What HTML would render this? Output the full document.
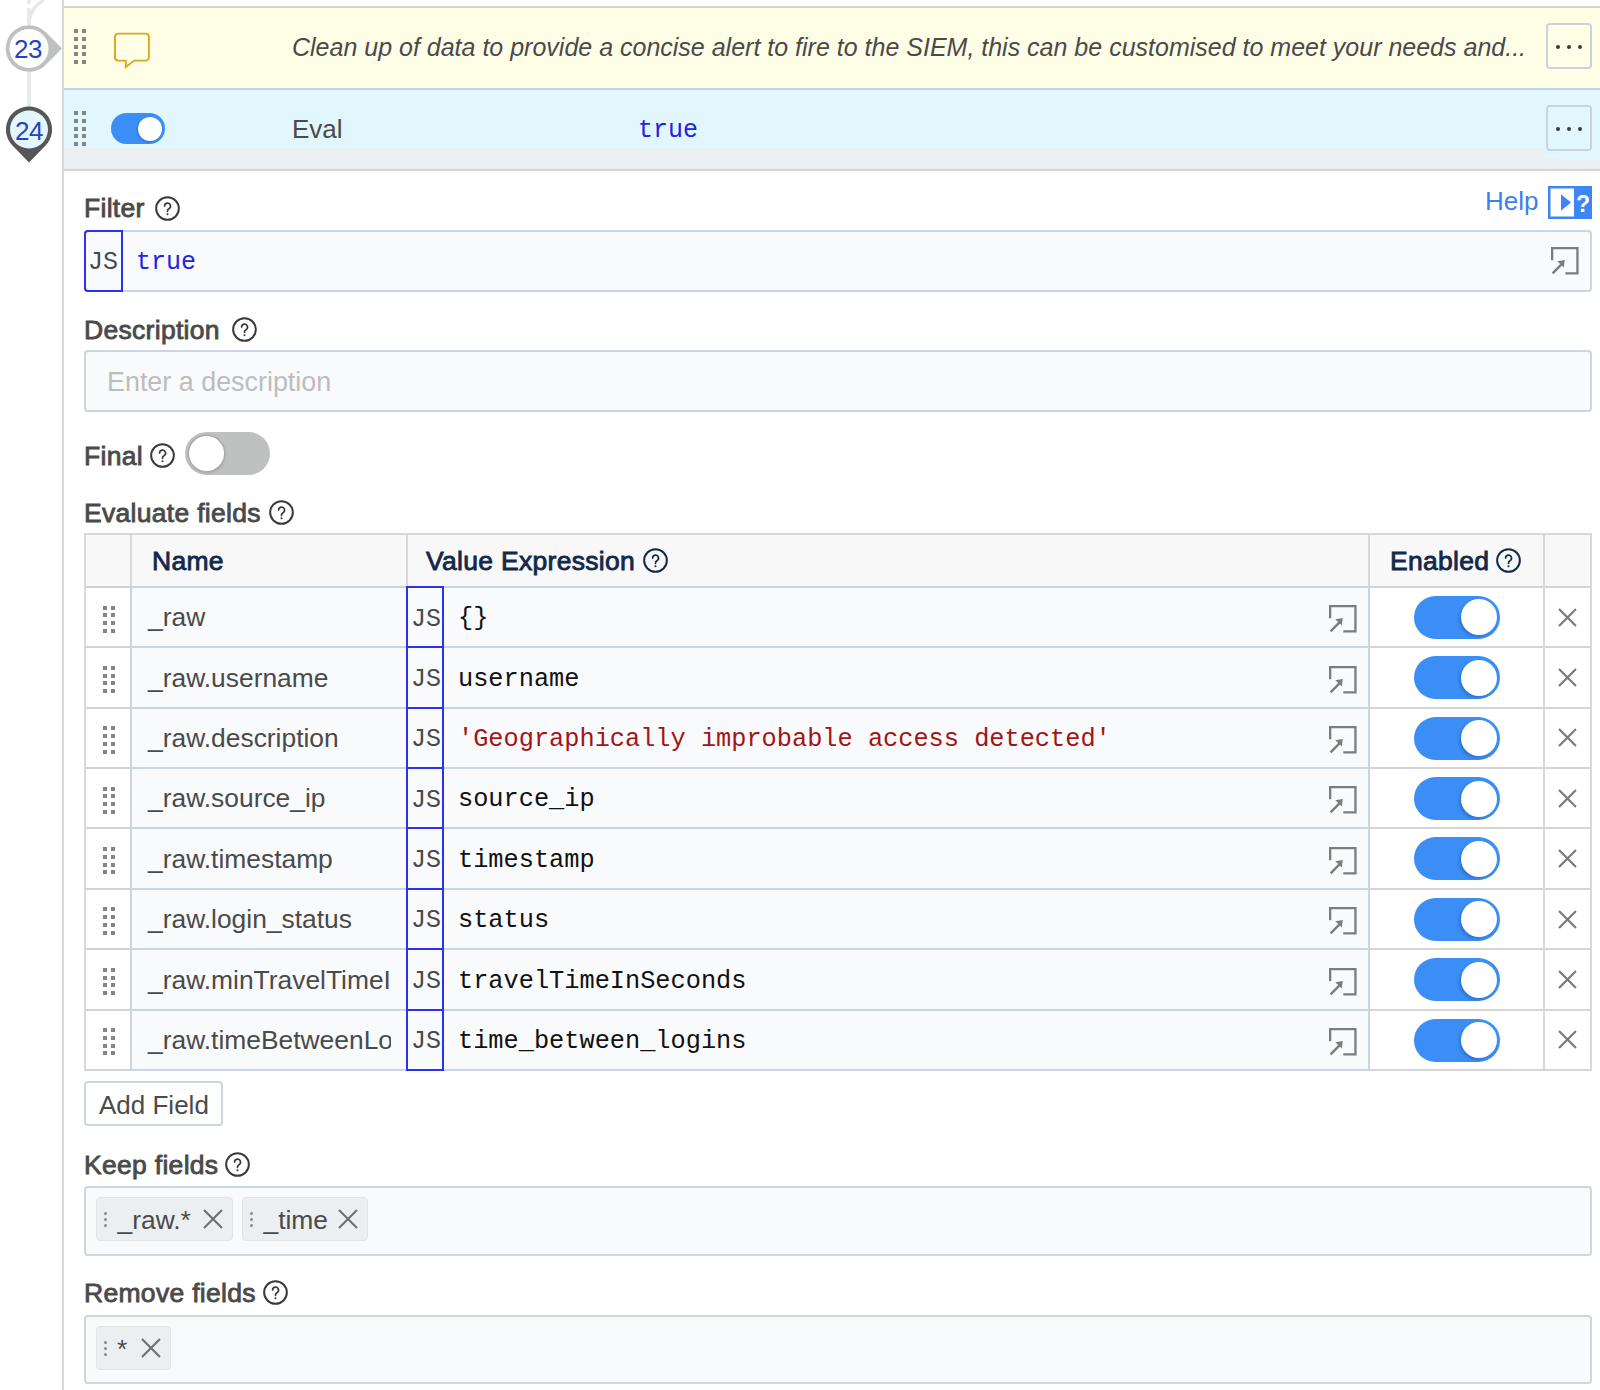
<!DOCTYPE html>
<html><head><meta charset="utf-8"><title>Eval</title>
<style>
html,body{margin:0;padding:0;}
body{width:1600px;height:1390px;overflow:hidden;position:relative;background:#fff;font-family:'Liberation Sans', sans-serif;}
.a{position:absolute;}
.t{position:absolute;white-space:nowrap;}
</style></head><body>
<div class="a" style="left:62px;top:0px;width:2px;height:1390px;background:#d7d8da"></div><svg class="a" style="left:0;top:0" width="62" height="170" viewBox="0 0 62 170"><path d="M29 0V4M29 8V25" stroke="#e6e9eb" stroke-width="3.5" fill="none"/><path d="M29 24C29 14 34 6 44 0" stroke="#e6e9eb" stroke-width="3.5" fill="none"/><path d="M29 72V107" stroke="#e6e9eb" stroke-width="3.5" fill="none"/><path d="M29 25.2A23.3 23.3 0 0 1 45.5 32L62 48.5L45.5 65A23.3 23.3 0 1 1 29 25.2Z" fill="#bfc0c0"/><circle cx="29" cy="48.5" r="19.5" fill="#fff"/><path d="M29 106.5A23 23 0 0 1 45.3 145.8L29 162.5L12.7 145.8A23 23 0 0 1 29 106.5Z" fill="#555757"/><circle cx="29" cy="129.5" r="19" fill="#e3f6fd"/></svg><div class="t" style="left:14px;top:35.99px;font-size:26px;line-height:26px;color:#2544c4;font-weight:400;font-style:normal;font-family:'Liberation Sans', sans-serif;letter-spacing:-0.5px">23</div><div class="t" style="left:15px;top:117.99px;font-size:26px;line-height:26px;color:#2544c4;font-weight:400;font-style:normal;font-family:'Liberation Sans', sans-serif;letter-spacing:-0.5px">24</div><div class="a" style="left:64px;top:6px;width:1536px;height:2px;background:#d5d3bd"></div><div class="a" style="left:64px;top:8px;width:1536px;height:80px;background:#fefee7"></div><div class="a" style="left:74px;top:29.0px;width:4px;height:4px;background:#858585"></div><div class="a" style="left:82px;top:29.0px;width:4px;height:4px;background:#858585"></div><div class="a" style="left:74px;top:36.75px;width:4px;height:4px;background:#858585"></div><div class="a" style="left:82px;top:36.75px;width:4px;height:4px;background:#858585"></div><div class="a" style="left:74px;top:44.5px;width:4px;height:4px;background:#858585"></div><div class="a" style="left:82px;top:44.5px;width:4px;height:4px;background:#858585"></div><div class="a" style="left:74px;top:52.25px;width:4px;height:4px;background:#858585"></div><div class="a" style="left:82px;top:52.25px;width:4px;height:4px;background:#858585"></div><div class="a" style="left:74px;top:60.0px;width:4px;height:4px;background:#858585"></div><div class="a" style="left:82px;top:60.0px;width:4px;height:4px;background:#858585"></div><svg class="a" style="left:112px;top:31px" width="40" height="40" viewBox="0 0 40 40"><path d="M6 2.6H33.4A3.3 3.3 0 0 1 36.9 6V26.2A3.3 3.3 0 0 1 33.4 29.6H22.2L13.8 36V29.6H6A3.3 3.3 0 0 1 3 26.2V6A3.3 3.3 0 0 1 6 2.6Z" fill="none" stroke="#d6a91c" stroke-width="1.9" stroke-linejoin="miter"/></svg><div class="t" style="left:292px;top:35.34px;font-size:25px;line-height:25px;color:#4a4a4a;font-weight:400;font-style:italic;font-family:'Liberation Sans', sans-serif;">Clean up of data to provide a concise alert to fire to the SIEM, this can be customised to meet your needs and...</div><div class="a" style="left:1546px;top:23px;width:46px;height:46px;box-sizing:border-box;border:2px solid #c9d3de;border-radius:4px;background:#fefee7"></div><div class="a" style="left:1555.9px;top:44.6px;width:4.2px;height:4.2px;border-radius:50%;background:#3a3a3a"></div><div class="a" style="left:1566.9px;top:44.6px;width:4.2px;height:4.2px;border-radius:50%;background:#3a3a3a"></div><div class="a" style="left:1577.9px;top:44.6px;width:4.2px;height:4.2px;border-radius:50%;background:#3a3a3a"></div><div class="a" style="left:64px;top:88px;width:1536px;height:2px;background:#c3d2dc"></div><div class="a" style="left:64px;top:90px;width:1536px;height:58px;background:#e2f6fe"></div><div class="a" style="left:64px;top:148px;width:1536px;height:21px;background:#ebeff2"></div><div class="a" style="left:64px;top:169px;width:1536px;height:2px;background:#d4d5d6"></div><div class="a" style="left:1544px;top:148px;width:18px;height:9.5px;background:#e2f6fe"></div><div class="a" style="left:1562px;top:148px;width:38px;height:12px;background:#e2f6fe"></div><div class="a" style="left:74px;top:111.0px;width:4px;height:4px;background:#858585"></div><div class="a" style="left:82px;top:111.0px;width:4px;height:4px;background:#858585"></div><div class="a" style="left:74px;top:118.75px;width:4px;height:4px;background:#858585"></div><div class="a" style="left:82px;top:118.75px;width:4px;height:4px;background:#858585"></div><div class="a" style="left:74px;top:126.5px;width:4px;height:4px;background:#858585"></div><div class="a" style="left:82px;top:126.5px;width:4px;height:4px;background:#858585"></div><div class="a" style="left:74px;top:134.25px;width:4px;height:4px;background:#858585"></div><div class="a" style="left:82px;top:134.25px;width:4px;height:4px;background:#858585"></div><div class="a" style="left:74px;top:142.0px;width:4px;height:4px;background:#858585"></div><div class="a" style="left:82px;top:142.0px;width:4px;height:4px;background:#858585"></div><div class="a" style="left:111px;top:113px;width:54px;height:31px;border-radius:16px;background:#3b8ef6"></div><div class="a" style="left:138px;top:116.5px;width:24px;height:24px;border-radius:50%;background:#fff;box-shadow:-1px 1px 2px rgba(0,0,60,0.2)"></div><div class="t" style="left:292px;top:115.99px;font-size:26px;line-height:26px;color:#4a4a4a;font-weight:400;font-style:normal;font-family:'Liberation Sans', sans-serif;">Eval</div><div class="t" style="left:638px;top:117.84px;font-size:25px;line-height:25px;color:#2323e0;font-weight:400;font-style:normal;font-family:'Liberation Mono', monospace;">true</div><div class="a" style="left:1546px;top:105px;width:46px;height:46px;box-sizing:border-box;border:2px solid #c9d3de;border-radius:4px;background:#e2f6fe"></div><div class="a" style="left:1555.9px;top:126.6px;width:4.2px;height:4.2px;border-radius:50%;background:#3a3a3a"></div><div class="a" style="left:1566.9px;top:126.6px;width:4.2px;height:4.2px;border-radius:50%;background:#3a3a3a"></div><div class="a" style="left:1577.9px;top:126.6px;width:4.2px;height:4.2px;border-radius:50%;background:#3a3a3a"></div><div class="t" style="left:84px;top:195.07px;font-size:26.5px;line-height:26.5px;color:#4a4a4a;font-weight:400;font-style:normal;font-family:'Liberation Sans', sans-serif;-webkit-text-stroke:0.85px #4a4a4a;letter-spacing:0.3px">Filter</div><svg class="a" style="left:154.90px;top:196.00px" width="25" height="25" viewBox="0 0 24 24"><circle cx="12" cy="12" r="10.9" fill="none" stroke="#3a3a3a" stroke-width="1.9"/><path d="M9.2 9.7a2.85 2.85 0 1 1 4.2 2.5c-0.9 0.5-1.4 1.1-1.4 2.1v0.6" fill="none" stroke="#3a3a3a" stroke-width="1.6" stroke-linecap="round"/><circle cx="12" cy="17.5" r="1.0" fill="#3a3a3a"/></svg><div class="t" style="left:1485px;top:187.99px;font-size:26px;line-height:26px;color:#3b80f0;font-weight:400;font-style:normal;font-family:'Liberation Sans', sans-serif;">Help</div><svg class="a" style="left:1548px;top:186px" width="44" height="33" viewBox="0 0 44 33"><rect x="0" y="0" width="44" height="33" fill="#3d86f6"/><rect x="2.5" y="2.5" width="23.5" height="28" fill="#fff"/><path d="M13 8.3L23 16.5L13 24.7Z" fill="#3d86f6"/><text x="35" y="25.5" font-family="Liberation Sans" font-weight="700" font-size="23" fill="#fff" text-anchor="middle">?</text></svg><div class="a" style="left:84px;top:230px;width:1508px;height:62px;box-sizing:border-box;border:2px solid #cad6e0;border-radius:4px;background:#f9fafc"></div><div class="a" style="left:84px;top:230px;width:39px;height:62px;box-sizing:border-box;border:2px solid #2f2ff2;border-radius:4px 0 0 4px"></div><div class="t" style="left:88px;top:250.34px;font-size:25px;line-height:25px;color:#4a4a4a;font-weight:400;font-style:normal;font-family:'Liberation Mono', monospace;">JS</div><div class="t" style="left:136px;top:250.34px;font-size:25px;line-height:25px;color:#2323e0;font-weight:400;font-style:normal;font-family:'Liberation Mono', monospace;">true</div><svg class="a" style="left:1548.40px;top:244.20px" width="34" height="34" viewBox="0 0 34 34"><path d="M4.15 16.3V4.15H29.45V29.4H17.3" fill="none" stroke="#7b7c7e" stroke-width="2.3"/><path d="M4.6 29.3L14.2 19.6" fill="none" stroke="#7b7c7e" stroke-width="2.4"/><path d="M9.3 17.2L16.8 16.1L15.8 23.5Z" fill="#7b7c7e"/></svg><div class="t" style="left:84px;top:316.57px;font-size:26.5px;line-height:26.5px;color:#4a4a4a;font-weight:400;font-style:normal;font-family:'Liberation Sans', sans-serif;-webkit-text-stroke:0.85px #4a4a4a;letter-spacing:0.3px">Description</div><svg class="a" style="left:231.90px;top:316.50px" width="25" height="25" viewBox="0 0 24 24"><circle cx="12" cy="12" r="10.9" fill="none" stroke="#3a3a3a" stroke-width="1.9"/><path d="M9.2 9.7a2.85 2.85 0 1 1 4.2 2.5c-0.9 0.5-1.4 1.1-1.4 2.1v0.6" fill="none" stroke="#3a3a3a" stroke-width="1.6" stroke-linecap="round"/><circle cx="12" cy="17.5" r="1.0" fill="#3a3a3a"/></svg><div class="a" style="left:84px;top:350px;width:1508px;height:62px;box-sizing:border-box;border:2px solid #cad6e0;border-radius:4px;background:#f9fafc"></div><div class="t" style="left:107px;top:368.53px;font-size:26.9px;line-height:26.9px;color:#bdbdbd;font-weight:400;font-style:normal;font-family:'Liberation Sans', sans-serif;">Enter a description</div><div class="t" style="left:84px;top:442.57px;font-size:26.5px;line-height:26.5px;color:#4a4a4a;font-weight:400;font-style:normal;font-family:'Liberation Sans', sans-serif;-webkit-text-stroke:0.85px #4a4a4a;letter-spacing:0.3px">Final</div><svg class="a" style="left:150.30px;top:443.00px" width="25" height="25" viewBox="0 0 24 24"><circle cx="12" cy="12" r="10.9" fill="none" stroke="#3a3a3a" stroke-width="1.9"/><path d="M9.2 9.7a2.85 2.85 0 1 1 4.2 2.5c-0.9 0.5-1.4 1.1-1.4 2.1v0.6" fill="none" stroke="#3a3a3a" stroke-width="1.6" stroke-linecap="round"/><circle cx="12" cy="17.5" r="1.0" fill="#3a3a3a"/></svg><div class="a" style="left:185px;top:432px;width:85px;height:43px;border-radius:22px;background:#bfc1c0"></div><div class="a" style="left:188.6px;top:435.8px;width:35.6px;height:35.6px;border-radius:50%;background:#fff;box-shadow:0 0 0 1.6px #a9abaa, 1px 2px 3px rgba(0,0,0,0.12)"></div><div class="t" style="left:84px;top:499.57px;font-size:26.5px;line-height:26.5px;color:#4a4a4a;font-weight:400;font-style:normal;font-family:'Liberation Sans', sans-serif;-webkit-text-stroke:0.85px #4a4a4a;letter-spacing:0.3px">Evaluate fields</div><svg class="a" style="left:268.80px;top:499.50px" width="25" height="25" viewBox="0 0 24 24"><circle cx="12" cy="12" r="10.9" fill="none" stroke="#3a3a3a" stroke-width="1.9"/><path d="M9.2 9.7a2.85 2.85 0 1 1 4.2 2.5c-0.9 0.5-1.4 1.1-1.4 2.1v0.6" fill="none" stroke="#3a3a3a" stroke-width="1.6" stroke-linecap="round"/><circle cx="12" cy="17.5" r="1.0" fill="#3a3a3a"/></svg><div class="a" style="left:84px;top:534px;width:1508px;height:53px;background:#f8f8f8"></div><div class="a" style="left:131px;top:587px;width:1238px;height:60px;background:#f9fafc"></div><div class="a" style="left:131px;top:647px;width:1238px;height:61px;background:#f9fafc"></div><div class="a" style="left:131px;top:708px;width:1238px;height:60px;background:#f9fafc"></div><div class="a" style="left:131px;top:768px;width:1238px;height:60px;background:#f9fafc"></div><div class="a" style="left:131px;top:828px;width:1238px;height:61px;background:#f9fafc"></div><div class="a" style="left:131px;top:889px;width:1238px;height:60px;background:#f9fafc"></div><div class="a" style="left:131px;top:949px;width:1238px;height:61px;background:#f9fafc"></div><div class="a" style="left:131px;top:1010px;width:1238px;height:60px;background:#f9fafc"></div><div class="a" style="left:84px;top:646px;width:47px;height:2px;background:#d3d3d3"></div><div class="a" style="left:131px;top:646px;width:1238px;height:2px;background:#c9d6e1"></div><div class="a" style="left:1369px;top:646px;width:223px;height:2px;background:#d5d5d5"></div><div class="a" style="left:84px;top:707px;width:47px;height:2px;background:#d3d3d3"></div><div class="a" style="left:131px;top:707px;width:1238px;height:2px;background:#c9d6e1"></div><div class="a" style="left:1369px;top:707px;width:223px;height:2px;background:#d5d5d5"></div><div class="a" style="left:84px;top:767px;width:47px;height:2px;background:#d3d3d3"></div><div class="a" style="left:131px;top:767px;width:1238px;height:2px;background:#c9d6e1"></div><div class="a" style="left:1369px;top:767px;width:223px;height:2px;background:#d5d5d5"></div><div class="a" style="left:84px;top:827px;width:47px;height:2px;background:#d3d3d3"></div><div class="a" style="left:131px;top:827px;width:1238px;height:2px;background:#c9d6e1"></div><div class="a" style="left:1369px;top:827px;width:223px;height:2px;background:#d5d5d5"></div><div class="a" style="left:84px;top:888px;width:47px;height:2px;background:#d3d3d3"></div><div class="a" style="left:131px;top:888px;width:1238px;height:2px;background:#c9d6e1"></div><div class="a" style="left:1369px;top:888px;width:223px;height:2px;background:#d5d5d5"></div><div class="a" style="left:84px;top:948px;width:47px;height:2px;background:#d3d3d3"></div><div class="a" style="left:131px;top:948px;width:1238px;height:2px;background:#c9d6e1"></div><div class="a" style="left:1369px;top:948px;width:223px;height:2px;background:#d5d5d5"></div><div class="a" style="left:84px;top:1009px;width:47px;height:2px;background:#d3d3d3"></div><div class="a" style="left:131px;top:1009px;width:1238px;height:2px;background:#c9d6e1"></div><div class="a" style="left:1369px;top:1009px;width:223px;height:2px;background:#d5d5d5"></div><div class="a" style="left:84px;top:1069px;width:47px;height:2px;background:#d3d3d3"></div><div class="a" style="left:131px;top:1069px;width:1238px;height:2px;background:#c9d6e1"></div><div class="a" style="left:1369px;top:1069px;width:223px;height:2px;background:#d5d5d5"></div><div class="a" style="left:84px;top:533px;width:1508px;height:2px;background:#d8d8d8"></div><div class="a" style="left:84px;top:586px;width:47px;height:2px;background:#d0d0d0"></div><div class="a" style="left:131px;top:586px;width:1238px;height:2px;background:#c9d6e0"></div><div class="a" style="left:1369px;top:586px;width:223px;height:2px;background:#d4d4d4"></div><div class="a" style="left:84px;top:534px;width:2px;height:536px;background:#d8d8d8"></div><div class="a" style="left:130px;top:534px;width:2px;height:53px;background:#d8d8d8"></div><div class="a" style="left:130px;top:587px;width:2px;height:483px;background:#c9d6e1"></div><div class="a" style="left:406px;top:534px;width:2px;height:53px;background:#d8d8d8"></div><div class="a" style="left:1368px;top:534px;width:2px;height:53px;background:#d8d8d8"></div><div class="a" style="left:1368px;top:587px;width:2px;height:483px;background:#c9d6e1"></div><div class="a" style="left:1543px;top:534px;width:2px;height:536px;background:#d8d8d8"></div><div class="a" style="left:1590px;top:534px;width:2px;height:536px;background:#d8d8d8"></div><div class="a" style="left:103px;top:605.5px;width:4px;height:4px;background:#858585"></div><div class="a" style="left:111px;top:605.5px;width:4px;height:4px;background:#858585"></div><div class="a" style="left:103px;top:613.25px;width:4px;height:4px;background:#858585"></div><div class="a" style="left:111px;top:613.25px;width:4px;height:4px;background:#858585"></div><div class="a" style="left:103px;top:621.0px;width:4px;height:4px;background:#858585"></div><div class="a" style="left:111px;top:621.0px;width:4px;height:4px;background:#858585"></div><div class="a" style="left:103px;top:628.75px;width:4px;height:4px;background:#858585"></div><div class="a" style="left:111px;top:628.75px;width:4px;height:4px;background:#858585"></div><div class="a" style="left:147px;top:587px;width:244px;height:60px;overflow:hidden"><div class="t" style="left:1px;top:17.34px;font-size:26.4px;line-height:26.4px;color:#4a4a4a;font-weight:400;font-style:normal;font-family:'Liberation Sans', sans-serif;">_raw</div></div><div class="a" style="left:406px;top:586px;width:38px;height:62px;box-sizing:border-box;border:2px solid #3030f0"></div><div class="t" style="left:411px;top:606.52px;font-size:25px;line-height:25px;color:#4a4a4a;font-weight:400;font-style:normal;font-family:'Liberation Mono', monospace;">JS</div><div class="t" style="left:458px;top:606.30px;font-size:25.3px;line-height:25.3px;color:#111;font-weight:400;font-style:normal;font-family:'Liberation Mono', monospace;">{}</div><svg class="a" style="left:1326.10px;top:602.25px" width="34" height="34" viewBox="0 0 34 34"><path d="M4.15 16.3V4.15H29.45V29.4H17.3" fill="none" stroke="#7b7c7e" stroke-width="2.3"/><path d="M4.6 29.3L14.2 19.6" fill="none" stroke="#7b7c7e" stroke-width="2.4"/><path d="M9.3 17.2L16.8 16.1L15.8 23.5Z" fill="#7b7c7e"/></svg><div class="a" style="left:1414px;top:595.89px;width:86px;height:43px;border-radius:21.5px;background:#3b8ef6"></div><div class="a" style="left:1460.5px;top:599.39px;width:36px;height:36px;border-radius:50%;background:#fff;box-shadow:-2px 2px 3px rgba(0,0,60,0.18)"></div><svg class="a" style="left:1558px;top:608px" width="19" height="19" viewBox="0 0 19 19"><path d="M1 1L18 18M18 1L1 18" stroke="#7a7a7a" stroke-width="2.2" fill="none"/></svg><div class="a" style="left:103px;top:665.88px;width:4px;height:4px;background:#858585"></div><div class="a" style="left:111px;top:665.88px;width:4px;height:4px;background:#858585"></div><div class="a" style="left:103px;top:673.63px;width:4px;height:4px;background:#858585"></div><div class="a" style="left:111px;top:673.63px;width:4px;height:4px;background:#858585"></div><div class="a" style="left:103px;top:681.38px;width:4px;height:4px;background:#858585"></div><div class="a" style="left:111px;top:681.38px;width:4px;height:4px;background:#858585"></div><div class="a" style="left:103px;top:689.13px;width:4px;height:4px;background:#858585"></div><div class="a" style="left:111px;top:689.13px;width:4px;height:4px;background:#858585"></div><div class="a" style="left:147px;top:647px;width:244px;height:61px;overflow:hidden"><div class="t" style="left:1px;top:17.71px;font-size:26.4px;line-height:26.4px;color:#4a4a4a;font-weight:400;font-style:normal;font-family:'Liberation Sans', sans-serif;">_raw.username</div></div><div class="a" style="left:406px;top:646px;width:38px;height:63px;box-sizing:border-box;border:2px solid #3030f0"></div><div class="t" style="left:411px;top:666.90px;font-size:25px;line-height:25px;color:#4a4a4a;font-weight:400;font-style:normal;font-family:'Liberation Mono', monospace;">JS</div><div class="t" style="left:458px;top:666.67px;font-size:25.3px;line-height:25.3px;color:#111;font-weight:400;font-style:normal;font-family:'Liberation Mono', monospace;">username</div><svg class="a" style="left:1326.10px;top:662.62px" width="34" height="34" viewBox="0 0 34 34"><path d="M4.15 16.3V4.15H29.45V29.4H17.3" fill="none" stroke="#7b7c7e" stroke-width="2.3"/><path d="M4.6 29.3L14.2 19.6" fill="none" stroke="#7b7c7e" stroke-width="2.4"/><path d="M9.3 17.2L16.8 16.1L15.8 23.5Z" fill="#7b7c7e"/></svg><div class="a" style="left:1414px;top:656.26px;width:86px;height:43px;border-radius:21.5px;background:#3b8ef6"></div><div class="a" style="left:1460.5px;top:659.76px;width:36px;height:36px;border-radius:50%;background:#fff;box-shadow:-2px 2px 3px rgba(0,0,60,0.18)"></div><svg class="a" style="left:1558px;top:668px" width="19" height="19" viewBox="0 0 19 19"><path d="M1 1L18 18M18 1L1 18" stroke="#7a7a7a" stroke-width="2.2" fill="none"/></svg><div class="a" style="left:103px;top:726.25px;width:4px;height:4px;background:#858585"></div><div class="a" style="left:111px;top:726.25px;width:4px;height:4px;background:#858585"></div><div class="a" style="left:103px;top:734.0px;width:4px;height:4px;background:#858585"></div><div class="a" style="left:111px;top:734.0px;width:4px;height:4px;background:#858585"></div><div class="a" style="left:103px;top:741.75px;width:4px;height:4px;background:#858585"></div><div class="a" style="left:111px;top:741.75px;width:4px;height:4px;background:#858585"></div><div class="a" style="left:103px;top:749.5px;width:4px;height:4px;background:#858585"></div><div class="a" style="left:111px;top:749.5px;width:4px;height:4px;background:#858585"></div><div class="a" style="left:147px;top:708px;width:244px;height:60px;overflow:hidden"><div class="t" style="left:1px;top:17.09px;font-size:26.4px;line-height:26.4px;color:#4a4a4a;font-weight:400;font-style:normal;font-family:'Liberation Sans', sans-serif;">_raw.description</div></div><div class="a" style="left:406px;top:707px;width:38px;height:62px;box-sizing:border-box;border:2px solid #3030f0"></div><div class="t" style="left:411px;top:727.27px;font-size:25px;line-height:25px;color:#4a4a4a;font-weight:400;font-style:normal;font-family:'Liberation Mono', monospace;">JS</div><div class="t" style="left:458px;top:727.05px;font-size:25.3px;line-height:25.3px;color:#a31515;font-weight:400;font-style:normal;font-family:'Liberation Mono', monospace;">'Geographically improbable access detected'</div><svg class="a" style="left:1326.10px;top:723.00px" width="34" height="34" viewBox="0 0 34 34"><path d="M4.15 16.3V4.15H29.45V29.4H17.3" fill="none" stroke="#7b7c7e" stroke-width="2.3"/><path d="M4.6 29.3L14.2 19.6" fill="none" stroke="#7b7c7e" stroke-width="2.4"/><path d="M9.3 17.2L16.8 16.1L15.8 23.5Z" fill="#7b7c7e"/></svg><div class="a" style="left:1414px;top:716.64px;width:86px;height:43px;border-radius:21.5px;background:#3b8ef6"></div><div class="a" style="left:1460.5px;top:720.14px;width:36px;height:36px;border-radius:50%;background:#fff;box-shadow:-2px 2px 3px rgba(0,0,60,0.18)"></div><svg class="a" style="left:1558px;top:728px" width="19" height="19" viewBox="0 0 19 19"><path d="M1 1L18 18M18 1L1 18" stroke="#7a7a7a" stroke-width="2.2" fill="none"/></svg><div class="a" style="left:103px;top:786.62px;width:4px;height:4px;background:#858585"></div><div class="a" style="left:111px;top:786.62px;width:4px;height:4px;background:#858585"></div><div class="a" style="left:103px;top:794.37px;width:4px;height:4px;background:#858585"></div><div class="a" style="left:111px;top:794.37px;width:4px;height:4px;background:#858585"></div><div class="a" style="left:103px;top:802.12px;width:4px;height:4px;background:#858585"></div><div class="a" style="left:111px;top:802.12px;width:4px;height:4px;background:#858585"></div><div class="a" style="left:103px;top:809.87px;width:4px;height:4px;background:#858585"></div><div class="a" style="left:111px;top:809.87px;width:4px;height:4px;background:#858585"></div><div class="a" style="left:147px;top:768px;width:244px;height:60px;overflow:hidden"><div class="t" style="left:1px;top:17.46px;font-size:26.4px;line-height:26.4px;color:#4a4a4a;font-weight:400;font-style:normal;font-family:'Liberation Sans', sans-serif;">_raw.source_ip</div></div><div class="a" style="left:406px;top:767px;width:38px;height:62px;box-sizing:border-box;border:2px solid #3030f0"></div><div class="t" style="left:411px;top:787.65px;font-size:25px;line-height:25px;color:#4a4a4a;font-weight:400;font-style:normal;font-family:'Liberation Mono', monospace;">JS</div><div class="t" style="left:458px;top:787.42px;font-size:25.3px;line-height:25.3px;color:#111;font-weight:400;font-style:normal;font-family:'Liberation Mono', monospace;">source_ip</div><svg class="a" style="left:1326.10px;top:783.38px" width="34" height="34" viewBox="0 0 34 34"><path d="M4.15 16.3V4.15H29.45V29.4H17.3" fill="none" stroke="#7b7c7e" stroke-width="2.3"/><path d="M4.6 29.3L14.2 19.6" fill="none" stroke="#7b7c7e" stroke-width="2.4"/><path d="M9.3 17.2L16.8 16.1L15.8 23.5Z" fill="#7b7c7e"/></svg><div class="a" style="left:1414px;top:777.01px;width:86px;height:43px;border-radius:21.5px;background:#3b8ef6"></div><div class="a" style="left:1460.5px;top:780.51px;width:36px;height:36px;border-radius:50%;background:#fff;box-shadow:-2px 2px 3px rgba(0,0,60,0.18)"></div><svg class="a" style="left:1558px;top:789px" width="19" height="19" viewBox="0 0 19 19"><path d="M1 1L18 18M18 1L1 18" stroke="#7a7a7a" stroke-width="2.2" fill="none"/></svg><div class="a" style="left:103px;top:847.0px;width:4px;height:4px;background:#858585"></div><div class="a" style="left:111px;top:847.0px;width:4px;height:4px;background:#858585"></div><div class="a" style="left:103px;top:854.75px;width:4px;height:4px;background:#858585"></div><div class="a" style="left:111px;top:854.75px;width:4px;height:4px;background:#858585"></div><div class="a" style="left:103px;top:862.5px;width:4px;height:4px;background:#858585"></div><div class="a" style="left:111px;top:862.5px;width:4px;height:4px;background:#858585"></div><div class="a" style="left:103px;top:870.25px;width:4px;height:4px;background:#858585"></div><div class="a" style="left:111px;top:870.25px;width:4px;height:4px;background:#858585"></div><div class="a" style="left:147px;top:828px;width:244px;height:61px;overflow:hidden"><div class="t" style="left:1px;top:17.84px;font-size:26.4px;line-height:26.4px;color:#4a4a4a;font-weight:400;font-style:normal;font-family:'Liberation Sans', sans-serif;">_raw.timestamp</div></div><div class="a" style="left:406px;top:827px;width:38px;height:63px;box-sizing:border-box;border:2px solid #3030f0"></div><div class="t" style="left:411px;top:848.02px;font-size:25px;line-height:25px;color:#4a4a4a;font-weight:400;font-style:normal;font-family:'Liberation Mono', monospace;">JS</div><div class="t" style="left:458px;top:847.80px;font-size:25.3px;line-height:25.3px;color:#111;font-weight:400;font-style:normal;font-family:'Liberation Mono', monospace;">timestamp</div><svg class="a" style="left:1326.10px;top:843.75px" width="34" height="34" viewBox="0 0 34 34"><path d="M4.15 16.3V4.15H29.45V29.4H17.3" fill="none" stroke="#7b7c7e" stroke-width="2.3"/><path d="M4.6 29.3L14.2 19.6" fill="none" stroke="#7b7c7e" stroke-width="2.4"/><path d="M9.3 17.2L16.8 16.1L15.8 23.5Z" fill="#7b7c7e"/></svg><div class="a" style="left:1414px;top:837.39px;width:86px;height:43px;border-radius:21.5px;background:#3b8ef6"></div><div class="a" style="left:1460.5px;top:840.89px;width:36px;height:36px;border-radius:50%;background:#fff;box-shadow:-2px 2px 3px rgba(0,0,60,0.18)"></div><svg class="a" style="left:1558px;top:849px" width="19" height="19" viewBox="0 0 19 19"><path d="M1 1L18 18M18 1L1 18" stroke="#7a7a7a" stroke-width="2.2" fill="none"/></svg><div class="a" style="left:103px;top:907.38px;width:4px;height:4px;background:#858585"></div><div class="a" style="left:111px;top:907.38px;width:4px;height:4px;background:#858585"></div><div class="a" style="left:103px;top:915.13px;width:4px;height:4px;background:#858585"></div><div class="a" style="left:111px;top:915.13px;width:4px;height:4px;background:#858585"></div><div class="a" style="left:103px;top:922.88px;width:4px;height:4px;background:#858585"></div><div class="a" style="left:111px;top:922.88px;width:4px;height:4px;background:#858585"></div><div class="a" style="left:103px;top:930.63px;width:4px;height:4px;background:#858585"></div><div class="a" style="left:111px;top:930.63px;width:4px;height:4px;background:#858585"></div><div class="a" style="left:147px;top:889px;width:244px;height:60px;overflow:hidden"><div class="t" style="left:1px;top:17.21px;font-size:26.4px;line-height:26.4px;color:#4a4a4a;font-weight:400;font-style:normal;font-family:'Liberation Sans', sans-serif;">_raw.login_status</div></div><div class="a" style="left:406px;top:888px;width:38px;height:62px;box-sizing:border-box;border:2px solid #3030f0"></div><div class="t" style="left:411px;top:908.40px;font-size:25px;line-height:25px;color:#4a4a4a;font-weight:400;font-style:normal;font-family:'Liberation Mono', monospace;">JS</div><div class="t" style="left:458px;top:908.17px;font-size:25.3px;line-height:25.3px;color:#111;font-weight:400;font-style:normal;font-family:'Liberation Mono', monospace;">status</div><svg class="a" style="left:1326.10px;top:904.12px" width="34" height="34" viewBox="0 0 34 34"><path d="M4.15 16.3V4.15H29.45V29.4H17.3" fill="none" stroke="#7b7c7e" stroke-width="2.3"/><path d="M4.6 29.3L14.2 19.6" fill="none" stroke="#7b7c7e" stroke-width="2.4"/><path d="M9.3 17.2L16.8 16.1L15.8 23.5Z" fill="#7b7c7e"/></svg><div class="a" style="left:1414px;top:897.76px;width:86px;height:43px;border-radius:21.5px;background:#3b8ef6"></div><div class="a" style="left:1460.5px;top:901.26px;width:36px;height:36px;border-radius:50%;background:#fff;box-shadow:-2px 2px 3px rgba(0,0,60,0.18)"></div><svg class="a" style="left:1558px;top:910px" width="19" height="19" viewBox="0 0 19 19"><path d="M1 1L18 18M18 1L1 18" stroke="#7a7a7a" stroke-width="2.2" fill="none"/></svg><div class="a" style="left:103px;top:967.75px;width:4px;height:4px;background:#858585"></div><div class="a" style="left:111px;top:967.75px;width:4px;height:4px;background:#858585"></div><div class="a" style="left:103px;top:975.5px;width:4px;height:4px;background:#858585"></div><div class="a" style="left:111px;top:975.5px;width:4px;height:4px;background:#858585"></div><div class="a" style="left:103px;top:983.25px;width:4px;height:4px;background:#858585"></div><div class="a" style="left:111px;top:983.25px;width:4px;height:4px;background:#858585"></div><div class="a" style="left:103px;top:991.0px;width:4px;height:4px;background:#858585"></div><div class="a" style="left:111px;top:991.0px;width:4px;height:4px;background:#858585"></div><div class="a" style="left:147px;top:949px;width:244px;height:61px;overflow:hidden"><div class="t" style="left:1px;top:17.59px;font-size:26.4px;line-height:26.4px;color:#4a4a4a;font-weight:400;font-style:normal;font-family:'Liberation Sans', sans-serif;">_raw.minTravelTimeInSeconds</div></div><div class="a" style="left:406px;top:948px;width:38px;height:63px;box-sizing:border-box;border:2px solid #3030f0"></div><div class="t" style="left:411px;top:968.77px;font-size:25px;line-height:25px;color:#4a4a4a;font-weight:400;font-style:normal;font-family:'Liberation Mono', monospace;">JS</div><div class="t" style="left:458px;top:968.55px;font-size:25.3px;line-height:25.3px;color:#111;font-weight:400;font-style:normal;font-family:'Liberation Mono', monospace;">travelTimeInSeconds</div><svg class="a" style="left:1326.10px;top:964.50px" width="34" height="34" viewBox="0 0 34 34"><path d="M4.15 16.3V4.15H29.45V29.4H17.3" fill="none" stroke="#7b7c7e" stroke-width="2.3"/><path d="M4.6 29.3L14.2 19.6" fill="none" stroke="#7b7c7e" stroke-width="2.4"/><path d="M9.3 17.2L16.8 16.1L15.8 23.5Z" fill="#7b7c7e"/></svg><div class="a" style="left:1414px;top:958.14px;width:86px;height:43px;border-radius:21.5px;background:#3b8ef6"></div><div class="a" style="left:1460.5px;top:961.64px;width:36px;height:36px;border-radius:50%;background:#fff;box-shadow:-2px 2px 3px rgba(0,0,60,0.18)"></div><svg class="a" style="left:1558px;top:970px" width="19" height="19" viewBox="0 0 19 19"><path d="M1 1L18 18M18 1L1 18" stroke="#7a7a7a" stroke-width="2.2" fill="none"/></svg><div class="a" style="left:103px;top:1028.12px;width:4px;height:4px;background:#858585"></div><div class="a" style="left:111px;top:1028.12px;width:4px;height:4px;background:#858585"></div><div class="a" style="left:103px;top:1035.87px;width:4px;height:4px;background:#858585"></div><div class="a" style="left:111px;top:1035.87px;width:4px;height:4px;background:#858585"></div><div class="a" style="left:103px;top:1043.62px;width:4px;height:4px;background:#858585"></div><div class="a" style="left:111px;top:1043.62px;width:4px;height:4px;background:#858585"></div><div class="a" style="left:103px;top:1051.37px;width:4px;height:4px;background:#858585"></div><div class="a" style="left:111px;top:1051.37px;width:4px;height:4px;background:#858585"></div><div class="a" style="left:147px;top:1010px;width:244px;height:60px;overflow:hidden"><div class="t" style="left:1px;top:16.96px;font-size:26.4px;line-height:26.4px;color:#4a4a4a;font-weight:400;font-style:normal;font-family:'Liberation Sans', sans-serif;">_raw.timeBetweenLogins</div></div><div class="a" style="left:406px;top:1009px;width:38px;height:62px;box-sizing:border-box;border:2px solid #3030f0"></div><div class="t" style="left:411px;top:1029.15px;font-size:25px;line-height:25px;color:#4a4a4a;font-weight:400;font-style:normal;font-family:'Liberation Mono', monospace;">JS</div><div class="t" style="left:458px;top:1028.92px;font-size:25.3px;line-height:25.3px;color:#111;font-weight:400;font-style:normal;font-family:'Liberation Mono', monospace;">time_between_logins</div><svg class="a" style="left:1326.10px;top:1024.88px" width="34" height="34" viewBox="0 0 34 34"><path d="M4.15 16.3V4.15H29.45V29.4H17.3" fill="none" stroke="#7b7c7e" stroke-width="2.3"/><path d="M4.6 29.3L14.2 19.6" fill="none" stroke="#7b7c7e" stroke-width="2.4"/><path d="M9.3 17.2L16.8 16.1L15.8 23.5Z" fill="#7b7c7e"/></svg><div class="a" style="left:1414px;top:1018.51px;width:86px;height:43px;border-radius:21.5px;background:#3b8ef6"></div><div class="a" style="left:1460.5px;top:1022.01px;width:36px;height:36px;border-radius:50%;background:#fff;box-shadow:-2px 2px 3px rgba(0,0,60,0.18)"></div><svg class="a" style="left:1558px;top:1030px" width="19" height="19" viewBox="0 0 19 19"><path d="M1 1L18 18M18 1L1 18" stroke="#7a7a7a" stroke-width="2.2" fill="none"/></svg><div class="t" style="left:152px;top:547.57px;font-size:26.5px;line-height:26.5px;color:#12294a;font-weight:400;font-style:normal;font-family:'Liberation Sans', sans-serif;-webkit-text-stroke:0.85px #12294a;letter-spacing:0.3px">Name</div><div class="t" style="left:426px;top:547.57px;font-size:26.5px;line-height:26.5px;color:#12294a;font-weight:400;font-style:normal;font-family:'Liberation Sans', sans-serif;-webkit-text-stroke:0.85px #12294a;letter-spacing:0.3px">Value Expression</div><svg class="a" style="left:642.50px;top:548.00px" width="25" height="25" viewBox="0 0 24 24"><circle cx="12" cy="12" r="10.9" fill="none" stroke="#12294a" stroke-width="1.9"/><path d="M9.2 9.7a2.85 2.85 0 1 1 4.2 2.5c-0.9 0.5-1.4 1.1-1.4 2.1v0.6" fill="none" stroke="#12294a" stroke-width="1.6" stroke-linecap="round"/><circle cx="12" cy="17.5" r="1.0" fill="#12294a"/></svg><div class="t" style="left:1390px;top:547.57px;font-size:26.5px;line-height:26.5px;color:#12294a;font-weight:400;font-style:normal;font-family:'Liberation Sans', sans-serif;-webkit-text-stroke:0.85px #12294a;letter-spacing:0.3px">Enabled</div><svg class="a" style="left:1496.00px;top:548.00px" width="25" height="25" viewBox="0 0 24 24"><circle cx="12" cy="12" r="10.9" fill="none" stroke="#12294a" stroke-width="1.9"/><path d="M9.2 9.7a2.85 2.85 0 1 1 4.2 2.5c-0.9 0.5-1.4 1.1-1.4 2.1v0.6" fill="none" stroke="#12294a" stroke-width="1.6" stroke-linecap="round"/><circle cx="12" cy="17.5" r="1.0" fill="#12294a"/></svg><div class="a" style="left:84px;top:1081px;width:139px;height:45px;box-sizing:border-box;border:2px solid #cad6e0;border-radius:4px;background:#fff"></div><div class="t" style="left:99px;top:1091.99px;font-size:26px;line-height:26px;color:#4a4a4a;font-weight:400;font-style:normal;font-family:'Liberation Sans', sans-serif;">Add Field</div><div class="t" style="left:84px;top:1151.57px;font-size:26.5px;line-height:26.5px;color:#4a4a4a;font-weight:400;font-style:normal;font-family:'Liberation Sans', sans-serif;-webkit-text-stroke:0.85px #4a4a4a;letter-spacing:0.3px">Keep fields</div><svg class="a" style="left:225.10px;top:1152.00px" width="25" height="25" viewBox="0 0 24 24"><circle cx="12" cy="12" r="10.9" fill="none" stroke="#3a3a3a" stroke-width="1.9"/><path d="M9.2 9.7a2.85 2.85 0 1 1 4.2 2.5c-0.9 0.5-1.4 1.1-1.4 2.1v0.6" fill="none" stroke="#3a3a3a" stroke-width="1.6" stroke-linecap="round"/><circle cx="12" cy="17.5" r="1.0" fill="#3a3a3a"/></svg><div class="a" style="left:84px;top:1186px;width:1508px;height:70px;box-sizing:border-box;border:2px solid #cad6e0;border-radius:4px;background:#f9fafc"></div><div class="a" style="left:96px;top:1197px;width:137px;height:44px;box-sizing:border-box;border:1px solid #e2e5e8;border-radius:4px;background:#eceff1"></div><div class="a" style="left:103.5px;top:1212.0px;width:3.2px;height:3.2px;border-radius:50%;background:#8a8a8a"></div><div class="a" style="left:103.5px;top:1217.8px;width:3.2px;height:3.2px;border-radius:50%;background:#8a8a8a"></div><div class="a" style="left:103.5px;top:1223.6px;width:3.2px;height:3.2px;border-radius:50%;background:#8a8a8a"></div><div class="t" style="left:117.5px;top:1207.15px;font-size:26.4px;line-height:26.4px;color:#4a4a4a;font-weight:400;font-style:normal;font-family:'Liberation Sans', sans-serif;">_raw.*</div><svg class="a" style="left:203px;top:1209px" width="20" height="20" viewBox="0 0 20 20"><path d="M1 1L19 19M19 1L1 19" stroke="#6f6f6f" stroke-width="2.1" fill="none"/></svg><div class="a" style="left:242px;top:1197px;width:126px;height:44px;box-sizing:border-box;border:1px solid #e2e5e8;border-radius:4px;background:#eceff1"></div><div class="a" style="left:249.5px;top:1212.0px;width:3.2px;height:3.2px;border-radius:50%;background:#8a8a8a"></div><div class="a" style="left:249.5px;top:1217.8px;width:3.2px;height:3.2px;border-radius:50%;background:#8a8a8a"></div><div class="a" style="left:249.5px;top:1223.6px;width:3.2px;height:3.2px;border-radius:50%;background:#8a8a8a"></div><div class="t" style="left:263.5px;top:1207.15px;font-size:26.4px;line-height:26.4px;color:#4a4a4a;font-weight:400;font-style:normal;font-family:'Liberation Sans', sans-serif;">_time</div><svg class="a" style="left:338px;top:1209px" width="20" height="20" viewBox="0 0 20 20"><path d="M1 1L19 19M19 1L1 19" stroke="#6f6f6f" stroke-width="2.1" fill="none"/></svg><div class="t" style="left:84px;top:1279.57px;font-size:26.5px;line-height:26.5px;color:#4a4a4a;font-weight:400;font-style:normal;font-family:'Liberation Sans', sans-serif;-webkit-text-stroke:0.85px #4a4a4a;letter-spacing:0.3px">Remove fields</div><svg class="a" style="left:262.90px;top:1279.50px" width="25" height="25" viewBox="0 0 24 24"><circle cx="12" cy="12" r="10.9" fill="none" stroke="#3a3a3a" stroke-width="1.9"/><path d="M9.2 9.7a2.85 2.85 0 1 1 4.2 2.5c-0.9 0.5-1.4 1.1-1.4 2.1v0.6" fill="none" stroke="#3a3a3a" stroke-width="1.6" stroke-linecap="round"/><circle cx="12" cy="17.5" r="1.0" fill="#3a3a3a"/></svg><div class="a" style="left:84px;top:1315px;width:1508px;height:69px;box-sizing:border-box;border:2px solid #cad6e0;border-radius:4px;background:#f9fafc"></div><div class="a" style="left:96px;top:1326px;width:75px;height:44px;box-sizing:border-box;border:1px solid #e2e5e8;border-radius:4px;background:#eceff1"></div><div class="a" style="left:103.5px;top:1341.0px;width:3.2px;height:3.2px;border-radius:50%;background:#8a8a8a"></div><div class="a" style="left:103.5px;top:1346.8px;width:3.2px;height:3.2px;border-radius:50%;background:#8a8a8a"></div><div class="a" style="left:103.5px;top:1352.6px;width:3.2px;height:3.2px;border-radius:50%;background:#8a8a8a"></div><div class="t" style="left:117px;top:1336.15px;font-size:26.4px;line-height:26.4px;color:#4a4a4a;font-weight:400;font-style:normal;font-family:'Liberation Sans', sans-serif;">*</div><svg class="a" style="left:141px;top:1338px" width="20" height="20" viewBox="0 0 20 20"><path d="M1 1L19 19M19 1L1 19" stroke="#6f6f6f" stroke-width="2.1" fill="none"/></svg>
</body></html>
